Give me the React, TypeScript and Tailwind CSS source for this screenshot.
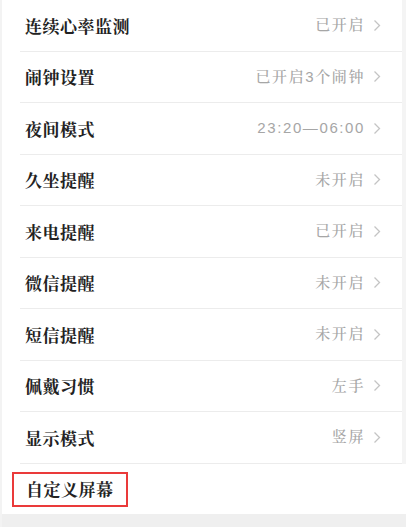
import React from 'react';

interface SettingRow {
  label: string;
  value: string;
}

const rows: SettingRow[] = [
  { label: '连续心率监测', value: '已开启' },
  { label: '闹钟设置', value: '已开启3个闹钟' },
  { label: '夜间模式', value: '23:20—06:00' },
  { label: '久坐提醒', value: '未开启' },
  { label: '来电提醒', value: '已开启' },
  { label: '微信提醒', value: '未开启' },
  { label: '短信提醒', value: '未开启' },
  { label: '佩戴习惯', value: '左手' },
  { label: '显示模式', value: '竖屏' },
];

const cjk = { fontFamily: '"Noto Serif CJK SC", "Noto Sans CJK SC", sans-serif' };
const valueFont = { fontFamily: '"Liberation Sans", "Noto Serif CJK SC", "Noto Sans CJK SC", sans-serif' };

function Chevron(): JSX.Element {
  return (
    <svg width="8" height="13" viewBox="0 0 8 13" fill="none" className="shrink-0">
      <polyline points="1.5,1.5 6.5,6.5 1.5,11.5" stroke="#c4c4c4" strokeWidth="1.3" />
    </svg>
  );
}

function Row({ label, value }: SettingRow): JSX.Element {
  return (
    <div className="ml-[18px] flex h-[51.5px] items-center justify-between border-b border-[#ececec] pl-[5px] pr-[21px]">
      <span className="text-[17px] font-bold tracking-[0.5px] text-[#222]" style={cjk}>
        {label}
      </span>
      <div className="flex items-center gap-[8px]">
        <span className="text-[15px] font-medium tracking-[1.6px] text-[#a6a6a6]" style={valueFont}>
          {value}
        </span>
        <Chevron />
      </div>
    </div>
  );
}

export default function App(): JSX.Element {
  return (
    <div className="flex h-[527px] w-[406px] flex-col overflow-hidden border-l-2 border-[#f3f3f3] bg-white">
      <div className="flex">
        <div className="flex-1">
          {rows.map((row) => (
            <Row key={row.label} {...row} />
          ))}
        </div>
        <div className="w-[4px] bg-[#f4f4f4]" />
      </div>
      <div className="flex flex-1 items-start pl-[10px] pt-[8px]">
        <div className="flex h-[35px] w-[116px] items-center border-2 border-[#ea3a3a] pl-[12px]">
          <span className="text-[17px] font-bold tracking-[0.5px] text-[#222]" style={cjk}>
            自定义屏幕
          </span>
        </div>
      </div>
      <div className="h-[13px] bg-[#efefef]" />
    </div>
  );
}
